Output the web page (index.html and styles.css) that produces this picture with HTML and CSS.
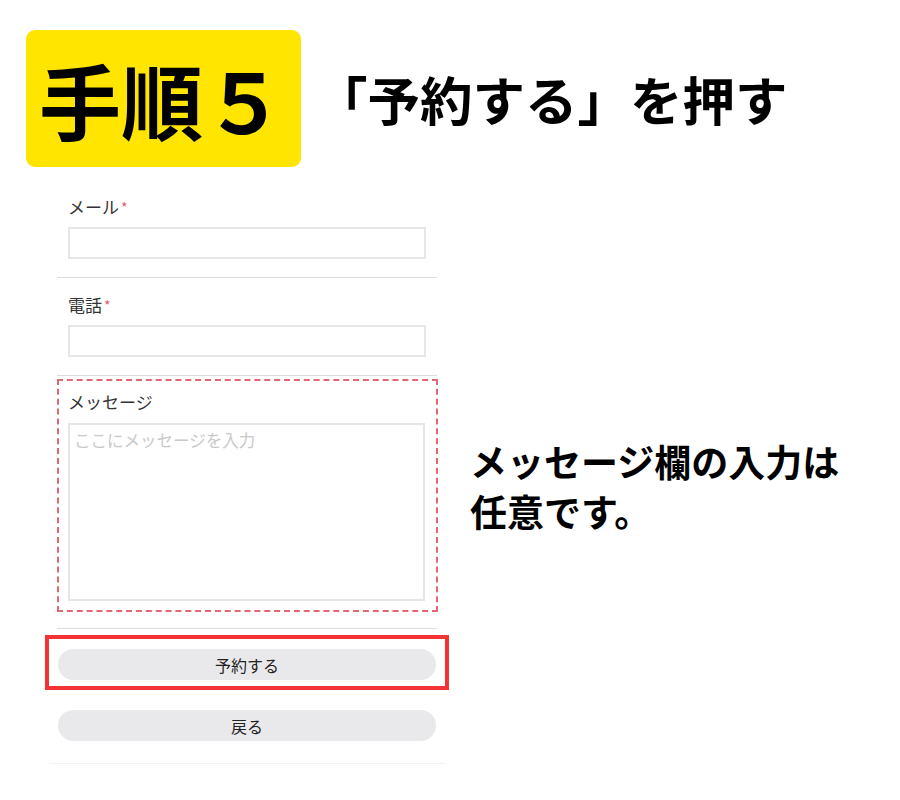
FILE: index.html
```html
<!DOCTYPE html>
<html lang="ja">
<head>
<meta charset="utf-8">
<title>手順5</title>
<link rel="stylesheet" href="styles.css">
</head>
<body>
<div class="page">
  <div class="header">
    <div class="badge">手順５</div>
    <div class="title">「予約する」を押す</div>
  </div>
  <div class="main">
    <div class="form-col">
      <div class="field">
        <div class="label">メール<span class="req">*</span></div>
        <div class="input"></div>
      </div>
      <div class="field">
        <div class="label">電話<span class="req">*</span></div>
        <div class="input"></div>
      </div>
      <div class="field field-msg">
        <div class="msg-box">
          <div class="label">メッセージ</div>
          <div class="textarea"><span class="placeholder">ここにメッセージを入力</span></div>
        </div>
      </div>
      <div class="submit-wrap">
        <div class="btn">予約する</div>
      </div>
      <div class="back-wrap">
        <div class="btn">戻る</div>
      </div>
      <div class="foot-line"></div>
    </div>
    <div class="note">メッセージ欄の入力は<br>任意です。</div>
  </div>
</div>
</body>
</html>
```

FILE: styles.css
```css
* { box-sizing: border-box; }
html, body { margin: 0; padding: 0; background: #fff; }
body {
  font-family: "Noto Sans CJK JP", "Noto Sans", sans-serif;
  color: #000;
}
.page {
  padding: 30px 0 0 26px;
}
.header {
  display: flex;
  align-items: center;
}
.badge {
  width: 275px;
  height: 137px;
  background: #ffe500;
  border-radius: 9px;
  display: flex;
  align-items: center;
  padding-left: 13px;
  font-size: 82px;
  font-weight: 700;
  line-height: 1;
  white-space: nowrap;
}
.title {
  margin-left: 14px;
  font-size: 52.5px;
  font-weight: 700;
  line-height: 1;
  white-space: nowrap;
}
.main {
  display: flex;
  align-items: flex-start;
  margin-top: 13px;
  margin-left: 19px;
}
.form-col {
  width: 404px;
  flex: none;
}
.field {
  margin: 0 12px;
  padding: 15px 11px 18px;
  border-bottom: 1px solid #dcdcdc;
}
.label {
  height: 24px;
  font-size: 17px;
  line-height: 24px;
  color: #333;
  margin-bottom: 8px;
}
.req {
  color: #e05a6c;
  font-size: 14px;
  line-height: 0;
  vertical-align: 1px;
  margin-left: 2px;
}
.input {
  height: 32px;
  border: 2px solid #e6e6e6;
  background: #fff;
}
.field-msg {
  padding: 3px 0 16px;
}
.msg-box {
  margin-right: -1px;
  border: 2px dashed #e06872;
  padding: 9px 11px 9px 9px;
}
.msg-box .label {
  margin-bottom: 9px;
}
.textarea {
  height: 178px;
  border: 2px solid #e6e6e6;
  padding: 3px 4px;
  font-size: 16.5px;
  line-height: 24px;
}
.placeholder {
  color: #c9c9c9;
}
.submit-wrap {
  margin-top: 6px;
  border: 4px solid #f43434;
  padding: 10px 9px 6px;
}
.btn {
  height: 31px;
  border-radius: 16px;
  background: #e9e9eb;
  display: flex;
  align-items: center;
  justify-content: center;
  font-size: 16px;
  color: #222;
}
.back-wrap {
  margin: 20px 13px 0 13px;
}
.foot-line {
  margin: 22px 4px 0;
  height: 1px;
  background: #f2f2f2;
}
.note {
  margin-left: 21px;
  margin-top: 256px;
  font-size: 37px;
  font-weight: 700;
  line-height: 50px;
  white-space: nowrap;
}
```
